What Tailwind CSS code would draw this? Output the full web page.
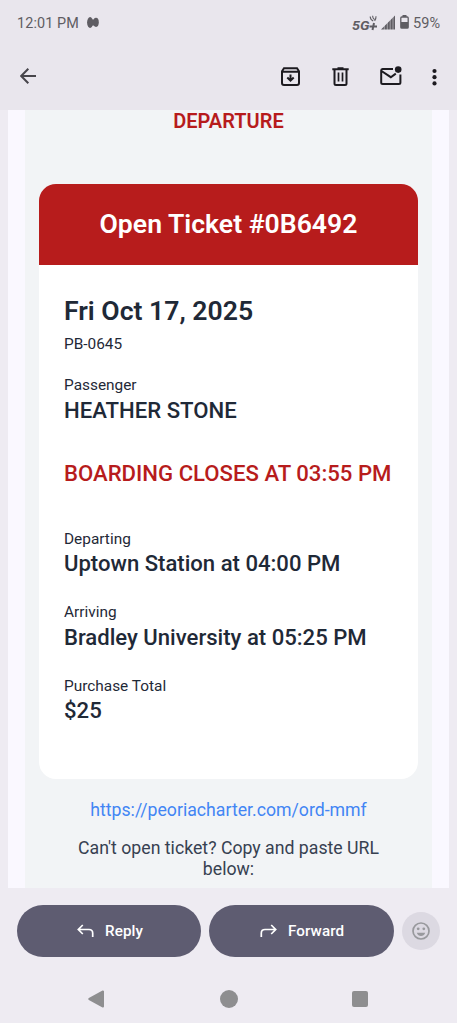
<!DOCTYPE html>
<html lang="en">
<head>
<meta charset="utf-8">
<title>Open Ticket</title>
<script src="https://cdn.jsdelivr.net/npm/@tailwindcss/browser@4"></script>
</head>
<body class="w-[457px] h-[1023px] overflow-hidden bg-[#eeebf2] font-[Roboto,sans-serif] text-[#1f2937] whitespace-nowrap flex flex-col">
<header class="h-[110px] shrink-0 bg-[#e9e6ed]">
  <div class="h-[46px] flex items-center pl-[17px] pr-[17px] text-[#5f5d63]">
    <span class="pt-px text-[14.4px] tracking-[0.1px]">12:01 PM</span>
    <svg class="ml-[8px] mb-[2px] w-3 h-[11px]" viewBox="0 0 12 11" fill="currentColor"><ellipse cx="3.100" cy="5.500" rx="3" ry="5.400"/><ellipse cx="9" cy="5.300" rx="2.800" ry="4.600"/><path d="M3 2.500h6v6H3z"/></svg>
    <svg class="ml-auto mb-px w-[26px] h-[18px]" viewBox="0 0 26 18"><text x="0" y="15.500" font-family="Roboto" font-size="12.500" font-weight="700" font-style="italic" fill="currentColor" textLength="17.500" lengthAdjust="spacingAndGlyphs">5G</text><g fill="none" stroke="currentColor"><path d="M17.500 12.500h7.500M22 9l-1.500 7" stroke-width="2"/><path d="M18.200 2.400q0 3 3 4.600M20.600 1.800q0 2.600 1.800 3.700M24 2.200q.2 2.600-1.400 4.600" stroke-width="1.100"/></g></svg>
    <svg class="ml-[3px] mb-px w-[14px] h-[15px]" viewBox="0 0 14 15"><path d="M0 14.500 14 .5v14z" fill="currentColor"/><path d="M3.300 8v7M6.300 5v10M9.200 2v13M12 0v15" stroke="#e9e6ed" stroke-width=".5"/></svg>
    <svg class="ml-[5px] mb-[2px] w-[9px] h-[14px]" viewBox="0 0 9 14"><path d="M2.500 0h4v2h-4z" fill="currentColor"/><rect x=".8" y="2" width="7.400" height="11.200" rx="1" fill="none" stroke="currentColor" stroke-width="1.300"/><path d="M1 7h7v6H1z" fill="currentColor"/></svg>
    <span class="ml-[4px] pt-px text-[14.500px]">59%</span>
  </div>
  <div class="h-[60px] flex items-center pl-[20px] pr-[20px] text-[#1d1b20]">
    <svg class="w-4 h-4" viewBox="0 0 16 16" fill="none" stroke="#47454b" stroke-width="2"><path d="M16 8H1.500M8.300.8 1.200 8l7.100 7.200"/></svg>
    <svg class="ml-[245px] w-[19px] h-[19px]" viewBox="0 0 19 19" fill="none" stroke="currentColor" stroke-width="2"><path d="M1 4.200 3 1.200h13l2 3V16q0 2-2 2H3q-2 0-2-2zM1 4.800h17M9.500 7.500v6M6.300 10.500l3.200 3.200 3.200-3.200"/></svg>
    <svg class="ml-[32px] w-[17px] h-[19px]" viewBox="0 0 17 19" fill="none" stroke="currentColor" stroke-width="2"><path d="M.3 2.300h16.400M5.500 1.300h6M2.500 2.500v14q0 1.500 1.500 1.500h9q1.500 0 1.500-1.500v-14"/><path d="M6.500 5.500v9M10.500 5.500v9" stroke-width="1.700"/></svg>
    <svg class="ml-[31px] mb-px w-[22px] h-[19px]" viewBox="0 0 22 19" fill="none" stroke="currentColor" stroke-width="2"><path d="M13 3H2.500Q1.200 3 1.200 4.500v12q0 1.500 1.500 1.500h16.200q1.500 0 1.500-1.500V8.500M1.500 5l9.300 6.200 5-3.600"/><circle cx="18.200" cy="3.600" r="3.300" fill="currentColor" stroke="none"/></svg>
    <svg class="ml-auto mt-px w-[5px] h-[18px]" viewBox="0 0 5 18" fill="currentColor"><circle cx="2.500" cy="3" r="2.100"/><circle cx="2.500" cy="9.200" r="2.100"/><circle cx="2.500" cy="15.400" r="2.100"/></svg>
  </div>
</header>
<main class="h-[778px] shrink-0 mx-2 pl-[17px] pr-[17px] bg-[#faf8ff]">
  <div class="h-full bg-[#f2f4f6] px-[14px] overflow-hidden">
    <div class="h-[22px] leading-[22px] text-[20px] font-semibold text-center text-[#b71c1c]">DEPARTURE</div>
    <section class="mt-[52px] h-[595px] w-[379px] rounded-[17px] bg-white overflow-hidden">
      <h1 class="h-[81px] leading-[80px] bg-[#b71c1c] text-white text-center text-[26.600px] font-semibold">Open Ticket #0B6492</h1>
      <div class="pl-[25px] pt-[30px]">
        <h2 class="leading-8 text-[26.600px] font-semibold">Fri Oct 17, 2025</h2>
        <p class="mt-[7px] leading-5 text-[15.400px]">PB-0645</p>
        <p class="mt-[21px] leading-5 text-[15.400px]">Passenger</p>
        <p class="mt-px leading-7 text-[22.150px] font-medium">HEATHER STONE</p>
        <p class="mt-[35px] leading-7 text-[22.150px] font-medium text-[#b71c1c]">BOARDING CLOSES AT 03:55 PM</p>
        <p class="mt-[42px] leading-5 text-[15.400px]">Departing</p>
        <p class="leading-7 text-[22.100px] font-medium">Uptown Station at 04:00 PM</p>
        <p class="mt-[25px] leading-5 text-[15.400px]">Arriving</p>
        <p class="mt-px leading-7 text-[22.100px] font-medium">Bradley University at 05:25 PM</p>
        <p class="mt-[25px] leading-5 text-[15.400px]">Purchase Total</p>
        <p class="leading-7 text-[22.150px] font-medium">$25</p>
      </div>
    </section>
    <p class="mt-[20px] leading-[22px] text-[17.700px] text-center text-[#4285f4]">https://peoriacharter.com/ord-mmf</p>
    <p class="mt-[17px] leading-[21px] text-[17.700px] text-center text-[#374151]">Can't open ticket? Copy and paste URL<br>below:</p>
  </div>
</main>
<div class="mt-[17px] h-[52px] shrink-0 flex items-center pl-[17px] text-white text-[15.200px] font-medium">
  <div class="w-[184px] h-[52px] rounded-full bg-[#5e5c71] flex items-center pl-[60px]">
    <svg class="w-[17px] h-[14px]" viewBox="0 0 17 14" fill="none" stroke="currentColor" stroke-width="1.700"><path d="M5.800 1 1.300 5.500 5.800 10M1.500 5.500H12q3.700 0 3.700 3.700V13"/></svg>
    <span class="ml-[11px] tracking-[0.1px]">Reply</span>
  </div>
  <div class="ml-2 w-[185px] h-[52px] rounded-full bg-[#5e5c71] flex items-center pl-[51px]">
    <svg class="w-[17px] h-[14px]" viewBox="0 0 17 14" fill="none" stroke="currentColor" stroke-width="1.700"><path d="M11.200 1l4.500 4.500-4.500 4.500M15.500 5.500H5Q1.300 5.500 1.300 9.200V13"/></svg>
    <span class="ml-[11px] tracking-[0.1px]">Forward</span>
  </div>
  <div class="ml-[8px] w-[38px] h-[38px] rounded-full bg-[#dcd9e2] flex items-center justify-center">
    <svg class="w-[18px] h-[18px]" viewBox="0 0 18 18" fill="#98999d"><circle cx="9" cy="9" r="8" fill="none" stroke="#98999d" stroke-width="1.700"/><circle cx="6.200" cy="6.800" r="1.400"/><circle cx="11.800" cy="6.800" r="1.400"/><path d="M4.800 10.800h8.400q-1.200 3.300-4.200 3.300t-4.200-3.300z"/></svg>
  </div>
</div>
<nav class="mt-[33px] h-[18px] shrink-0 flex items-center pl-[88px] text-[#8e8e90]">
  <svg class="w-[17px] h-[18px]" viewBox="0 0 17 18" fill="currentColor" stroke="currentColor" stroke-width="2" stroke-linejoin="round"><path d="M1.300 9 15 1.500v15z"/></svg>
  <div class="ml-[115px] w-[18px] h-[18px] rounded-full bg-[#8e8e90]"></div>
  <div class="ml-[114px] w-4 h-4 rounded-[2px] bg-[#8e8e90]"></div>
</nav>
</body>
</html>
